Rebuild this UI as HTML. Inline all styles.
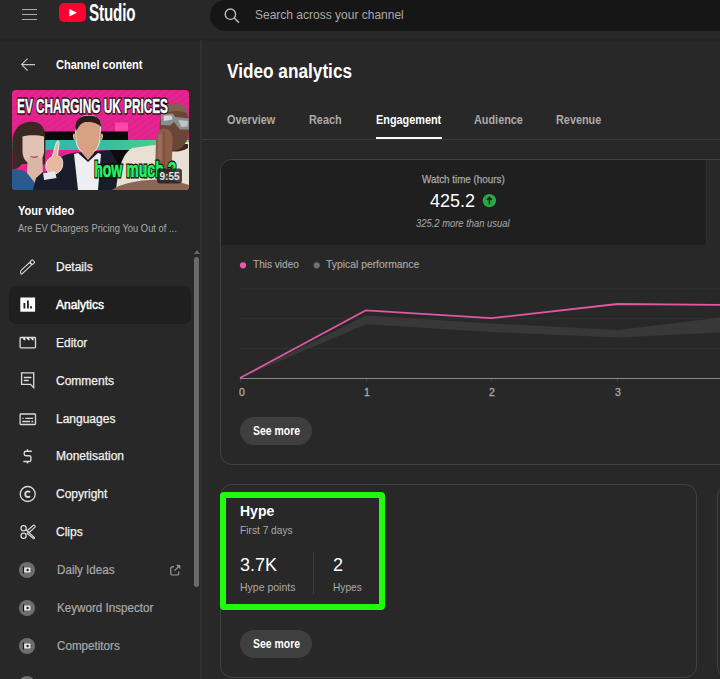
<!DOCTYPE html>
<html><head><meta charset="utf-8">
<style>
*{margin:0;padding:0;box-sizing:border-box}
html,body{width:720px;height:679px;overflow:hidden;background:#282828;font-family:"Liberation Sans",sans-serif;color:#f1f1f1}
.a{position:absolute;white-space:nowrap}
.t{position:absolute;white-space:nowrap;line-height:1}
.ax{top:387px;font-size:10.5px;color:#aaa;-webkit-text-stroke:0.3px #aaa}
.btn{width:72px;height:28px;border-radius:14px;background:#3f3f3f}
.btn span{position:absolute;left:12.5px;top:7.6px;line-height:1;color:#fff;font-size:12px;font-weight:bold;transform:scaleX(0.87);transform-origin:0 0;white-space:nowrap}
.nv{left:56px;font-size:12px;color:#f1f1f1;-webkit-text-stroke:0.25px #f1f1f1}
.nv.g{left:57px;color:#aaa;-webkit-text-stroke:0.2px #aaa;letter-spacing:0;transform:scaleX(0.97);transform-origin:0 0}
</style></head><body>
<!-- header -->
<div class="a" style="left:0;top:0;width:720px;height:39px;background:#282828"></div>
<div class="a" style="left:0;top:39px;width:720px;height:2px;background:linear-gradient(#262626,#232323 60%,#272727)"></div>
<div class="a" style="left:22px;top:8.5px;width:15px;height:1px;background:#aaa"></div>
<div class="a" style="left:22px;top:13.5px;width:15px;height:1px;background:#aaa"></div>
<div class="a" style="left:22px;top:18.5px;width:15px;height:1px;background:#aaa"></div>
<svg class="a" style="left:59px;top:3px" width="28" height="19" viewBox="0 0 28 19"><rect x="0" y="0" width="27" height="19" rx="5" fill="#ff0033"/><path d="M10.3 6 L10.3 13.5 L18 9.75 Z" fill="#fff"/></svg>
<div class="t" id="studio" style="left:88.5px;top:1.8px;font-size:23.5px;font-weight:bold;letter-spacing:-0.2px;transform:scaleX(0.645);transform-origin:0 0;color:#fff">Studio</div>
<!-- search -->
<div class="a" style="left:210px;top:0;width:560px;height:31px;border-radius:15.5px;background:#161616"></div>
<svg class="a" style="left:222px;top:6px" width="20" height="20" viewBox="0 0 20 20"><circle cx="8.4" cy="8.2" r="5.2" fill="none" stroke="#bbb" stroke-width="1.4"/><path d="M12.2 12 L17 16.6" stroke="#bbb" stroke-width="1.5"/></svg>
<div class="t" id="search" style="left:255px;top:9px;font-size:12px;color:#aaa">Search across your channel</div>

<!-- sidebar -->
<div class="a" style="left:200px;top:40px;width:2px;height:639px;background:#303030"></div>
<svg class="a" style="left:19px;top:56px" width="18" height="18" viewBox="0 0 18 18"><path d="M2.6 8.6 H16 M8.6 2.7 L2.6 8.6 L8.6 14.5" fill="none" stroke="#c8c8c8" stroke-width="1.1"/></svg>
<div class="t" id="chc" style="transform:scaleX(0.92);transform-origin:0 0;left:56px;top:59px;font-size:12px;font-weight:bold;color:#fff">Channel content</div>

<svg class="a" style="left:12px;top:90px" width="177" height="100" viewBox="0 0 177 100">
<defs>
<clipPath id="tc"><rect width="177" height="100" rx="4"/></clipPath>
<linearGradient id="band" x1="0" x2="1"><stop offset="0" stop-color="#2cb6b6"/><stop offset="0.55" stop-color="#36bfa0"/><stop offset="1" stop-color="#5ed674"/></linearGradient>
<pattern id="stripe" width="5" height="5" patternUnits="userSpaceOnUse" patternTransform="rotate(-35)"><rect width="5" height="2.5" fill="#cf1c80"/></pattern>
</defs>
<g clip-path="url(#tc)">
<rect width="177" height="100" fill="#e62591"/>
<rect y="0" width="177" height="100" fill="url(#stripe)" opacity="0.35"/>
<rect x="103" y="32.5" width="13" height="9" fill="#ff46ad"/>
<rect x="32" y="41.5" width="84" height="8.5" fill="#0a0a0a"/>
<rect x="0" y="50" width="177" height="10" fill="url(#band)"/>
<!-- man middle -->
<path d="M26 100 L34 82 C38 72 48 66 60 63 L98 60 C108 62 116 70 116 80 L116 100 Z" fill="#191c2b"/>
<path d="M62 64 L66 63 L76 72 L86 63 L89 64 L86 100 L66 100 Z" fill="#eeeef2"/>
<path d="M66 34 C66 27 71 25.5 77 25.5 C84 25.5 89 29 88.5 37 L88 49 C87 58 82 64 76 64 C69 64 65 58 64 50 L63.5 42 Z" fill="#d9a184" stroke="#f4f4f4" stroke-width="0.9"/>
<path d="M63.5 37 C63.5 28 70 25.5 77 25.5 C85 25.5 89.5 29 89 37 C86 33 80 31.5 74 32 C70 32.5 67 35 64.5 41 Z" fill="#2a1c18"/>
<path d="M63 44 C61 42 60 46 62 50 L64 50 Z M89 44 C91 42 92 46 90 50 L88 50 Z" fill="#d9a184"/>
<path d="M70 63 L76 70 L82 63 L80 59 L72 59 Z" fill="#d9a184"/>
<!-- hand -->
<path d="M34 79 C33 73 36 68 40 67 L44.5 52 C45.5 50 47.5 50.5 47 53.5 L45.5 66 C49.5 66 51.5 70 50.5 76 C49.5 82 43.5 85 37.5 85 Z" fill="#e8b89e" stroke="#f6f6f6" stroke-width="0.8"/>
<path d="M30.5 83.5 L43 81 L44.5 88 L32 90 Z" fill="#e6e6ee"/>
<!-- woman -->
<path d="M0.3 52 C1 38 9 31.8 19.5 31.8 C29.5 31.8 33.5 38 33.5 50 L33 73.8 C29 76 27 75.5 25 74 L10 74 C7 78 3 79.4 0.3 79.4 Z" fill="#3a2822"/>
<path d="M10.5 46.5 C16 44.8 26 44.8 32 46.5 L32 62 C31 70 26.5 73.8 21 73.8 C15.5 73.8 11 70 10.5 62 Z" fill="#e0c3b4"/>
<path d="M15.5 68 L30.5 68 L31 88 L23.5 94 L15 86 Z" fill="#d9b6a6"/>
<path d="M18.5 66.3 C21 67.4 24 67.4 26 66.3" stroke="#b5505a" stroke-width="1.4" fill="none"/>
<path d="M0 79.4 C5 79 11 80 15 83 L23 93 L21.5 100 L0 100 Z" fill="#2b5a8e"/>
<path d="M21 100 L24 88 L31 82 L33 100 Z" fill="#191c2b"/>
<path d="M98 60 L118 60 L118 74 L106 74 Z" fill="#0c0c0c"/>
<!-- man right -->
<path d="M104 100 C106 80 110 64 120 58 L150 54 L177 52 L177 100 Z" fill="#e8e0d2"/>
<path d="M177 50 L180 50 L180 60 L177 60 Z" fill="#5bd377"/>
<path d="M148 56 C152 62 166 64 176 58 L176 54 L148 54 Z" fill="#3a2820"/>
<ellipse cx="162.5" cy="37" rx="15" ry="23.5" fill="#6a4636"/>
<path d="M150 24 C152 16 157 13.6 163 13.6 C170 13.6 175 17 177 24 C170 20 158 20 150 24Z" fill="#80604f"/>
<path d="M149 24 L161 23.6 L163 27 L178 28.5 L178 39.5 L168 39.5 L162 32 L158 35.5 L149 35 Z" fill="#8b8c90"/>
<path d="M151.5 25.5 L159.5 25.5 L160.5 29.5 L152 31 Z" fill="#d4d5da"/>
<path d="M166.5 30 L176 31 L175.5 36.5 L169 37 Z" fill="#c2c3c8"/>
<path d="M143 86 L144 50 C145 41 149 37.9 152.5 38.5 C156 37.9 161 42 160.5 50 L159.5 86 Z" fill="#8c5e4a"/>
<path d="M152 41 L152.2 84" stroke="#6d4333" stroke-width="0.8"/>
<path d="M146 46 C147 44 149 43 150 44 L149.5 70 L146 70 Z" fill="#a27461" opacity="0.7"/>
<path d="M100 100 C110 92 138 88 160 90 L177 95 L177 100 Z" fill="#8a6657"/>
<!-- text -->
<g transform="scale(0.74 1)" font-family="Liberation Sans" font-weight="bold">
<text x="6.8" y="23.4" font-size="20.5" fill="#000" stroke="#000" stroke-width="2.8" textLength="204" lengthAdjust="spacingAndGlyphs">EV CHARGING UK PRICES</text>
<text x="6.8" y="23.4" font-size="20.5" fill="#fff" stroke="#fff" stroke-width="0.5" textLength="204" lengthAdjust="spacingAndGlyphs">EV CHARGING UK PRICES</text>
<text x="111" y="87.4" font-size="22" fill="#000" stroke="#000" stroke-width="3" textLength="111" lengthAdjust="spacingAndGlyphs">how much ?</text>
<text x="111" y="87.4" font-size="22" fill="#26f462" stroke="#26f462" stroke-width="0.7" textLength="111" lengthAdjust="spacingAndGlyphs">how much ?</text></g>
<rect x="145" y="78.5" width="25" height="15" rx="3" fill="rgba(25,25,25,0.78)"/>
<text x="157.5" y="89.6" text-anchor="middle" font-family="Liberation Sans" font-weight="bold" font-size="10" fill="#e6e6e6">9:55</text>
</g>
</svg>

<div class="t" id="yv" style="transform:scaleX(0.92);transform-origin:0 0;left:18px;top:205px;font-size:12px;font-weight:bold;color:#fff">Your video</div>
<div class="t" id="yvt" style="transform:scaleX(0.892);transform-origin:0 0;left:18px;top:223px;font-size:10.5px;color:#aaa">Are EV Chargers Pricing You Out of ...</div>

<div class="a" style="left:9px;top:286px;width:182px;height:38px;border-radius:8px;background:#1f1f1f"></div>
<svg class="a" style="left:0;top:240px" width="200" height="439" viewBox="0 240 200 439">
<g fill="none" stroke="#dadada" stroke-width="1.2">
<g transform="translate(27.3 266.8) rotate(-43)" stroke-width="1.05"><path d="M-9.4 1.2 C-9.4 -0.6 -7.8 -1.6 -6.3 -1.6 H4.6 V1.6 H-8.8 Z"/><rect x="5.2" y="-1.9" width="3.4" height="3.8" rx="0.9"/></g>
</g>
<rect x="20.3" y="297.5" width="14.8" height="14.2" fill="#fff"/>
<g fill="#1f1f1f"><rect x="23.5" y="303" width="1.8" height="5.5"/><rect x="27" y="300.5" width="1.8" height="8"/><rect x="30.1" y="306.2" width="1.8" height="2.3"/></g>
<g fill="none" stroke="#dadada" stroke-width="1.3">
<rect x="20.1" y="337.5" width="15.4" height="10.4" rx="0.8"/>
</g>
<path d="M22.4 337.8 H24.8 L25.6 339.4 C25.6 340.4 24.4 340.6 23.8 340 Z M26.5 337.8 H28.9 L29.7 339.4 C29.7 340.4 28.5 340.6 27.9 340 Z M30.6 337.8 H33.0 L33.8 339.4 C33.8 340.4 32.6 340.6 32.0 340 Z " fill="#e8e8e8"/>
<g fill="none" stroke="#dadada" stroke-width="1.3">
<path d="M21.6 372.8 H33.7 V387.6 L30.5 384.4 H21.6 Z"/>
<path d="M24.4 377.5 H30.8 M24.4 380.4 H28.2" stroke-width="1.5" stroke-linecap="round"/>
<rect x="20.1" y="414" width="15.4" height="10.5" rx="0.8"/>
<path d="M22.3 418.4 H23.5 M25.3 418.4 H33.2 M22.3 421.5 H30.1 M31.5 421.5 H33.2"/>
<path d="M31.8 451.2 H25.8 C24.9 451.2 24.2 451.9 24.2 452.8 V454.1 C24.2 455 24.9 455.7 25.8 455.7 H29.3 C30.2 455.7 30.9 456.4 30.9 457.3 V459.9 C30.9 460.8 30.2 461.5 29.3 461.5 H23.3 M27.5 449.2 V451.2 M27.5 461.5 V463.5" stroke-width="1.35"/>
<circle cx="27.7" cy="494" r="7.5"/>
<path d="M30 492.3 C29.4 491.6 28.7 491.4 27.9 491.4 C26.2 491.4 25.3 492.6 25.3 494.2 C25.3 495.8 26.2 497 27.9 497 C28.7 497 29.4 496.7 30 496.1" stroke-width="1.9"/>
<circle cx="23.6" cy="528.2" r="2.6" stroke-width="1.25"/>
<circle cx="23.6" cy="535.7" r="2.6" stroke-width="1.25"/>
<path d="M25.9 529.6 L34.2 537.4 C34.8 538 34.2 538.8 33.4 538.5 L26.8 533" stroke-width="1.2"/>
<g transform="translate(31.2 528.9) rotate(-42)"><rect x="-4.6" y="-1.3" width="9.4" height="2.6" rx="1.1" stroke-width="1.15"/></g>
</g>
<g id="vq"><circle cx="27" cy="570" r="8" fill="#6e6e6e"/>
<rect x="22.8" y="566.4" width="1.4" height="7.2" fill="#1a1a1a"/>
<path d="M24.2 567.6 L29.4 567.6 C30.4 567.6 30.8 568.6 30.8 570 C30.8 571.4 30.4 572.5 29.4 572.5 L24.2 572.5 Z" fill="#e8e8e8"/>
<circle cx="27.6" cy="570" r="1.2" fill="#2a2a2a"/>
<path d="M30.6 569.3 L32 570 L30.6 570.7Z" fill="#2a2a2a"/></g>
<use href="#vq" y="38"/><use href="#vq" y="76"/><use href="#vq" y="114"/>
<g fill="none" stroke="#9a9a9a" stroke-width="1.2"><path d="M174 566.9 H172.2 C171.2 566.9 170.8 567.3 170.8 568.3 V573.6 C170.8 574.6 171.2 575 172.2 575 H177.4 C178.4 575 178.8 574.6 178.8 573.6 V571.6 M174.6 570.6 L179.4 565.8"/><path d="M176.6 565.2 H180 V568.6 Z" fill="#9a9a9a" stroke-width="0.6"/></g>
</svg>
<div class="t nv" style="top:260.6px">Details</div>
<div class="t nv" style="top:298.6px;-webkit-text-stroke:0.45px #fff;color:#fff">Analytics</div>
<div class="t nv" style="top:336.6px">Editor</div>
<div class="t nv" style="top:374.6px">Comments</div>
<div class="t nv" style="top:412.6px">Languages</div>
<div class="t nv" style="top:450.4px">Monetisation</div>
<div class="t nv" style="top:488.4px">Copyright</div>
<div class="t nv" style="top:526.4px">Clips</div>
<div class="t nv g" style="top:564.4px">Daily Ideas</div>
<div class="t nv g" style="top:602.4px">Keyword Inspector</div>
<div class="t nv g" style="top:640.4px">Competitors</div>
<div class="t nv g" style="top:678px">Research</div>


<!-- scrollbar -->
<svg class="a" style="left:194px;top:249px" width="6" height="6" viewBox="0 0 6 6"><path d="M0 5 L3 1 L6 5Z" fill="#6b6b6b"/></svg>
<div class="a" style="left:194px;top:257px;width:5px;height:330px;border-radius:2.5px;background:#6b6b6b"></div>

<!-- main -->
<div class="t" id="va" style="transform:scaleX(0.883);transform-origin:0 0;left:227px;top:62px;font-size:19.5px;font-weight:bold;color:#fff">Video analytics</div>
<div class="t" style="left:227px;top:113.5px;font-size:12px;font-weight:bold;transform:scaleX(0.905);transform-origin:0 0;color:#aaa">Overview</div>
<div class="t" style="left:309px;top:113.5px;font-size:12px;font-weight:bold;transform:scaleX(0.905);transform-origin:0 0;color:#aaa">Reach</div>
<div class="t" id="eng" style="left:376px;top:113.5px;font-size:12px;font-weight:bold;transform:scaleX(0.905);transform-origin:0 0;color:#fff">Engagement</div>
<div class="t" style="left:474px;top:113.5px;font-size:12px;font-weight:bold;transform:scaleX(0.905);transform-origin:0 0;color:#aaa">Audience</div>
<div class="t" style="left:556px;top:113.5px;font-size:12px;font-weight:bold;transform:scaleX(0.905);transform-origin:0 0;color:#aaa">Revenue</div>
<div class="a" style="left:202px;top:139px;width:518px;height:1px;background:#3a3a3a"></div>
<div class="a" style="left:376px;top:137px;width:66px;height:2px;background:#fff"></div>

<!-- card 1 -->
<div class="a" style="left:220px;top:159px;width:540px;height:306px;border:1px solid #424242;border-radius:12px;overflow:hidden">
  <div class="a" style="left:0;top:0;width:485px;height:85px;background:#1f1f1f"></div>
  <div class="a" style="left:485px;top:0;width:1px;height:85px;background:#303030"></div>
</div>
<div class="t" id="wt" style="-webkit-text-stroke:0.25px #aaa;transform:scaleX(0.937);transform-origin:0 0;left:422px;top:174px;font-size:10.5px;color:#aaa">Watch time (hours)</div>
<div class="t" id="wv" style="left:430px;top:192px;font-size:18px;color:#fff">425.2</div>
<svg class="a" style="left:482px;top:193px" width="15" height="15" viewBox="0 0 15 15"><circle cx="7.4" cy="7.6" r="6.7" fill="#2ba640"/><path d="M7.4 11.2 V4.6 M4.9 7 L7.4 4.4 L9.9 7" fill="none" stroke="#1f1f1f" stroke-width="1.5"/></svg>
<div class="t" id="wm" style="transform:scaleX(0.94);transform-origin:0 0;left:416px;top:219px;font-size:10px;font-style:italic;color:#aaa">325.2 more than usual</div>

<svg class="a" style="left:236px;top:261px" width="12" height="10"><circle cx="7" cy="4.3" r="3.1" fill="#e85aa8"/></svg>
<div class="t" id="l1" style="-webkit-text-stroke:0.15px #aaa;transform:scaleX(0.915);transform-origin:0 0;left:253px;top:259px;font-size:11px;color:#aaa">This video</div>
<svg class="a" style="left:311px;top:261px" width="12" height="10"><circle cx="5.7" cy="4.3" r="3.1" fill="#717171"/></svg>
<div class="t" id="l2" style="-webkit-text-stroke:0.15px #aaa;transform:scaleX(0.942);transform-origin:0 0;left:326px;top:259px;font-size:11px;color:#aaa">Typical performance</div>

<svg class="a" style="left:0;top:0" width="720" height="679" viewBox="0 0 720 679">
<g stroke="#333" stroke-width="1"><path d="M240 289 H720 M240 318.7 H720 M240 348.3 H720"/></g>
<path d="M240 378 L366 315.5 L491 323.5 L618 330 L720 317.5 L720 332.5 L618 337.5 L491 332 L366 324.3 Z" fill="#383838"/>

<path d="M240 378.5 H720" stroke="#8a8a8a" stroke-width="1"/>
<g stroke="#3c3c3c" stroke-width="1"><path d="M240.5 379 V382 M366.5 379 V382 M491.5 379 V382 M617.5 379 V382"/></g>
<path d="M240 378 L366 310.3 L491 318.2 L617.5 304 L720 304.8" fill="none" stroke="#de58a2" stroke-width="1.8" stroke-linejoin="round"/>
</svg>
<div class="t ax" style="left:239px">0</div>
<div class="t ax" style="left:364px">1</div>
<div class="t ax" style="left:489px">2</div>
<div class="t ax" style="left:615px">3</div>

<div class="a btn" style="left:240px;top:417px"><span>See more</span></div>

<!-- card 2 -->
<div class="a" style="left:220px;top:484px;width:477px;height:194px;border:1px solid #424242;border-radius:12px"></div>
<div class="a" style="left:717px;top:484px;width:40px;height:194px;border:1px solid #424242;border-radius:12px"></div>
<div class="t" id="hy" style="left:240px;top:504.4px;font-size:14px;font-weight:bold;color:#fff">Hype</div>
<div class="t" id="f7" style="transform:scaleX(0.97);transform-origin:0 0;left:240px;top:525px;font-size:10.5px;color:#aaa">First 7 days</div>
<div class="t" id="h37" style="left:240px;top:556.4px;font-size:18px;color:#fff">3.7K</div>
<div class="t" id="hp" style="left:240px;top:582px;font-size:10.5px;color:#aaa">Hype points</div>
<div class="a" style="left:313px;top:552px;width:1px;height:42px;background:#3e3e3e"></div>
<div class="t" id="h2" style="left:333px;top:556.4px;font-size:18px;color:#fff">2</div>
<div class="t" id="hs" style="transform:scaleX(0.965);transform-origin:0 0;left:333px;top:582px;font-size:10.5px;color:#aaa">Hypes</div>
<div class="a" style="left:220px;top:492px;width:165px;height:118px;border:6px solid #1ffb0c;border-radius:4px"></div>

<div class="a btn" style="left:240px;top:630px"><span>See more</span></div>

</body></html>
